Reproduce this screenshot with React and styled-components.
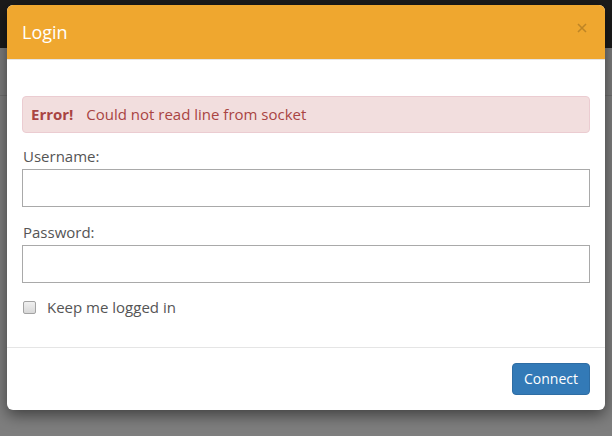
import styled, { createGlobalStyle } from "styled-components";

const GlobalStyle = createGlobalStyle`
  html, body {
    margin: 0;
    padding: 0;
  }
  body {
    font-family: "Open Sans", "Liberation Sans", sans-serif;
    font-size: 15px;
    line-height: 20px;
    color: #555;
  }
  * {
    box-sizing: border-box;
  }
`;

const Backdrop = styled.div`
  width: 612px;
  height: 436px;
  overflow: hidden;
  padding: 5px 7px 0 7px;
  background: linear-gradient(
    to bottom,
    #1b1b1b 0px,
    #1b1b1b 48px,
    #7c7c7c 48px,
    #7c7c7c 95px,
    #6f6f6f 95px,
    #6f6f6f 96px,
    #7e7e7e 96px
  );
`;

const Modal = styled.div`
  width: 598px;
  background: #fff;
  border-radius: 6px;
  box-shadow: 0 5px 15px rgba(0, 0, 0, 0.5);
  overflow: hidden;
`;

const Header = styled.div`
  display: flex;
  align-items: center;
  justify-content: space-between;
  height: 55px;
  padding: 0 15px;
  background: #efa72f;
  border-bottom: 1px solid #e5e5e5;
`;

const Title = styled.h4`
  margin: 0;
  font-size: 18px;
  font-weight: 400;
  line-height: 24px;
  color: #fff;
`;

const Close = styled.button`
  display: flex;
  align-items: center;
  justify-content: center;
  width: 14px;
  height: 14px;
  margin-top: -8px;
  margin-right: 1px;
  padding: 0;
  border: none;
  background: none;
  cursor: pointer;
`;

const Body = styled.div`
  padding: 36px 15px 30px 15px;
`;

const Alert = styled.div`
  padding: 7px 8px;
  line-height: 21px;
  margin-bottom: 13px;
  background: #f2dede;
  border: 1px solid #ebccd1;
  border-radius: 4px;
  color: #a94442;
`;

const AlertStrong = styled.strong`
  font-weight: 700;
  margin-right: 9px;
`;

const Group = styled.div`
  margin-bottom: ${(p) => (p.$last ? "14px" : "15px")};
`;

const Label = styled.label`
  display: block;
  margin-bottom: 3px;
  padding-left: 1px;
`;

const Input = styled.input`
  display: block;
  width: 100%;
  height: 38px;
  padding: 6px 12px;
  border: 1px solid #a9a9a9;
  border-radius: 0;
  font-family: inherit;
  font-size: 15px;
  color: #555;
  outline: none;
`;

const CheckRow = styled.label`
  display: flex;
  align-items: center;
  height: 20px;
  padding-left: 1px;
`;

const Check = styled.input`
  appearance: none;
  width: 13px;
  height: 13px;
  margin: 0 11px 0 0;
  border: 1px solid #a3a3a3;
  border-radius: 2px;
  background: linear-gradient(#f0f0f0, #d8d8d8);
`;

const Footer = styled.div`
  display: flex;
  justify-content: flex-end;
  padding: 15px;
  border-top: 1px solid #e5e5e5;
`;

const Button = styled.button`
  height: 32px;
  padding: 0 11px;
  border: 1px solid #2e6da4;
  border-radius: 4px;
  background: #337ab7;
  color: #fff;
  font-family: inherit;
  font-size: 14px;
  line-height: 20px;
  cursor: pointer;
`;

const App = () => {
  return (
    <>
      <GlobalStyle />
      <Backdrop>
        <Modal>
          <Header>
            <Title>Login</Title>
            <Close aria-label="Close">
              <svg width="10" height="10" viewBox="0 0 10 10">
                <path
                  d="M1 1 L9 9 M9 1 L1 9"
                  stroke="rgba(0,0,0,0.2)"
                  strokeWidth="1.6"
                  fill="none"
                />
              </svg>
            </Close>
          </Header>
          <Body>
            <Alert>
              <AlertStrong>Error!</AlertStrong> Could not read line from socket
            </Alert>
            <Group>
              <Label>Username:</Label>
              <Input type="text" />
            </Group>
            <Group $last>
              <Label>Password:</Label>
              <Input type="password" />
            </Group>
            <CheckRow>
              <Check type="checkbox" />
              Keep me logged in
            </CheckRow>
          </Body>
          <Footer>
            <Button>Connect</Button>
          </Footer>
        </Modal>
      </Backdrop>
    </>
  );
};

export default App;
